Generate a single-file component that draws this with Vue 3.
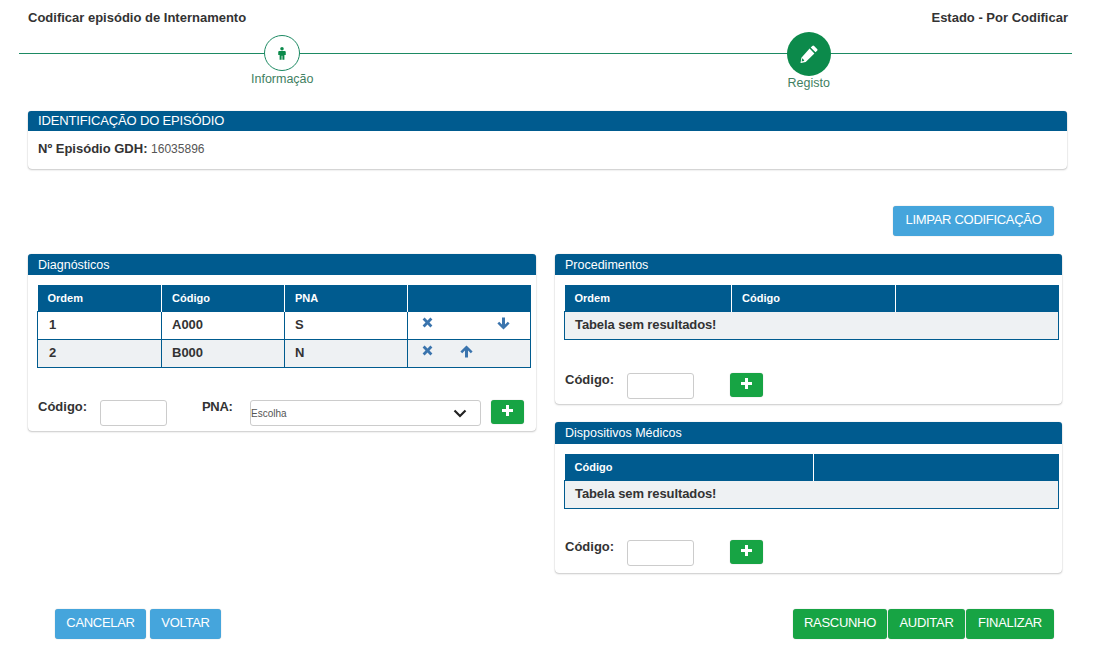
<template>
  <div class="page">
    <div class="top">
      <span>Codificar episódio de Internamento</span>
      <span>Estado - Por Codificar</span>
    </div>

    <div class="stepper">
      <div class="step">
        <div class="circle small">
          <svg width="8" height="15" viewBox="0 0 10 16"><circle cx="5" cy="2.2" r="2.2" fill="#0c8a4b"/><path d="M1.600 4.800h6.800q1.300 0 1.300 1.300v3.700H8v6H5.500v-5h-1v5H2v-6H.3V6.100q0-1.300 1.300-1.300z" fill="#0c8a4b"/></svg>
        </div>
        <div class="step-label first">Informação</div>
      </div>
      <div class="step">
        <div class="circle big">
          <svg width="18" height="18" viewBox="0 0 18 18"><path d="M12.300.9q.9-.9 1.800 0l3 3q.9.9 0 1.800l-1.600 1.600-4.800-4.800zM9.600 3.600l4.800 4.800-8.700 8.700-5.200 1 .9-5.300zM2.200 13.600l-.6 2.800 2.100-.4.6-.6-1.600-1.800z" fill="#fff"/></svg>
        </div>
        <div class="step-label">Registo</div>
      </div>
    </div>

    <section class="panel episode">
      <h3 class="panel-title big-title">IDENTIFICAÇÃO DO EPISÓDIO</h3>
      <div class="episode-body"><b>Nº Episódio GDH:</b> <span>16035896</span></div>
    </section>

    <div class="clear-row">
      <button class="btn blue clear">LIMPAR CODIFICAÇÃO</button>
    </div>

    <div class="columns">
      <div class="col-left">
        <section class="panel">
          <h3 class="panel-title">Diagnósticos</h3>
          <div class="panel-body left-body">
            <table class="grid">
              <colgroup><col v-for="(w, i) in leftWidths" :key="i" :style="{ width: w + 'px' }"></colgroup>
              <thead>
                <tr><th>Ordem</th><th>Código</th><th>PNA</th><th></th></tr>
              </thead>
              <tbody>
                <tr v-for="(row, i) in diagnosticos" :key="row.ordem" :class="{ odd: i == 1 }">
                  <td>{{ row.ordem }}</td>
                  <td>{{ row.codigo }}</td>
                  <td>{{ row.pna }}</td>
                  <td>
                    <div class="actions">
                      <svg class="ico" width="11" height="11" viewBox="0 0 11 11"><path d="M2.600.6 5.500 3.500 8.400.6l2 2-2.900 2.900 2.900 2.900-2 2-2.900-2.900-2.900 2.900-2-2 2.900-2.900L.6 2.600z" fill="#3a74ad"/></svg>
                      <svg v-if="row.up" class="ico up" width="13" height="13" viewBox="0 0 13 13"><path d="M6.500.5 12.600 6.600 10.800 8.300 8 5.600V12.500H5V5.600L2.200 8.300.4 6.600z" fill="#3a74ad"/></svg>
                      <svg v-if="row.down" class="ico down" width="13" height="13" viewBox="0 0 13 13"><path d="M6.500 12.500.4 6.400 2.200 4.700 5 7.400V.5H8V7.400L10.800 4.700 12.600 6.400z" fill="#3a74ad"/></svg>
                    </div>
                  </td>
                </tr>
              </tbody>
            </table>
            <div class="form-row">
              <label class="lbl">Código:</label>
              <input class="code" type="text">
              <label class="lbl pna">PNA:</label>
              <div class="select-wrap">
                <select class="sel"><option>Escolha</option></select>
                <svg class="chevron" width="14" height="9" viewBox="0 0 14 9"><path d="M1.500 1.500 7 7l5.500-5.500" fill="none" stroke="#222" stroke-width="2.200"/></svg>
              </div>
              <button class="btn green plus">
                <svg width="11" height="11" viewBox="0 0 11 11"><path d="M4 0h3v4h4v3H7v4H4V7H0V4h4z" fill="#fff"/></svg>
              </button>
            </div>
          </div>
        </section>
      </div>

      <div class="col-right">
        <section class="panel" v-for="p in rightPanels" :key="p.title">
          <h3 class="panel-title">{{ p.title }}</h3>
          <div class="panel-body right-body">
            <table class="grid">
              <colgroup><col v-for="(w, i) in p.widths" :key="i" :style="{ width: w + 'px' }"></colgroup>
              <thead>
                <tr><th v-for="(h, i) in p.heads" :key="i">{{ h }}</th></tr>
              </thead>
              <tbody>
                <tr class="odd empty"><td :colspan="p.heads.length">Tabela sem resultados!</td></tr>
              </tbody>
            </table>
            <div class="form-row right-form">
              <label class="lbl">Código:</label>
              <input class="code" type="text">
              <button class="btn green plus">
                <svg width="11" height="11" viewBox="0 0 11 11"><path d="M4 0h3v4h4v3H7v4H4V7H0V4h4z" fill="#fff"/></svg>
              </button>
            </div>
          </div>
        </section>
      </div>
    </div>

    <div class="bottom">
      <div class="group">
        <button class="btn blue foot cancel">CANCELAR</button>
        <button class="btn blue foot back">VOLTAR</button>
      </div>
      <div class="group tight">
        <button class="btn green foot draft">RASCUNHO</button>
        <button class="btn green foot audit">AUDITAR</button>
        <button class="btn green foot finish">FINALIZAR</button>
      </div>
    </div>
  </div>
</template>

<script setup>
const diagnosticos = [
  { ordem: 1, codigo: 'A000', pna: 'S', down: true },
  { ordem: 2, codigo: 'B000', pna: 'N', up: true }
]

const leftWidths = [124, 123, 123, 123]

const rightPanels = [
  { title: 'Procedimentos', heads: ['Ordem', 'Código', ''], widths: [167, 164, 163] },
  { title: 'Dispositivos Médicos', heads: ['Código', ''], widths: [249, 245] }
]
</script>

<style>
body {
  background: #fff;
}
</style>

<style scoped>
.page {
  width: 1108px;
  height: 655px;
  overflow: hidden;
  font-family: "Liberation Sans", Arial, sans-serif;
  color: #333;
  font-size: 13px;
}
.top {
  display: flex;
  justify-content: space-between;
  padding: 10px 40px 0 28px;
  font-weight: bold;
  font-size: 13px;
  line-height: 15px;
}
.stepper {
  position: relative;
  display: flex;
  margin: 7px 36px 0 19px;
  height: 79px;
}
.stepper::before {
  content: "";
  position: absolute;
  left: 0;
  right: 0;
  top: 21px;
  border-top: 1px solid #1d8a63;
}
.step {
  position: relative;
  flex: 1;
  display: flex;
  flex-direction: column;
  align-items: center;
}
.circle {
  display: flex;
  align-items: center;
  justify-content: center;
  border-radius: 50%;
  box-sizing: border-box;
}
.circle.small {
  width: 36px;
  height: 36px;
  margin-top: 3px;
  background: #fff;
  border: 1px solid #1d8a63;
}
.circle.big {
  width: 44px;
  height: 44px;
  background: #0c8a4b;
}
.step-label {
  font-size: 12.500px;
  line-height: 15px;
  color: #3f7f62;
}
.step-label.first {
  margin-top: 1px;
}
.panel {
  background: #fff;
  border-radius: 4px;
  box-shadow: 0 1px 2px rgba(0, 0, 0, 0.2), 0 0 1px rgba(0, 0, 0, 0.25);
}
.episode {
  margin: 0 41px 0 28px;
  height: 58px;
}
.panel-title {
  margin: 0;
  padding-left: 10px;
  height: 21px;
  line-height: 22px;
  background: #005b8f;
  color: #fff;
  font-size: 12.500px;
  font-weight: normal;
  border-radius: 3px 3px 0 0;
}
.col-right .panel:last-child .panel-title {
  height: 22px;
}
.big-title {
  font-size: 13px;
  letter-spacing: -0.15px;
  height: 20px;
  line-height: 20px;
}
.episode-body {
  padding: 10px;
  line-height: 15px;
  font-size: 13px;
}
.episode-body span {
  font-size: 12px;
  color: #555;
}
.clear-row {
  display: flex;
  justify-content: flex-end;
  margin: 37px 54px 18px 0;
}
.btn {
  border: 0;
  border-radius: 3px;
  font-family: inherit;
  color: #fff;
  padding: 0;
  box-shadow: 0 0 1px rgba(0, 0, 0, 0.35);
}
.blue {
  background: #45a5dc;
}
.green {
  background: #17a444;
}
.clear {
  width: 161px;
  height: 30px;
  font-size: 13px;
  letter-spacing: -0.3px;
  padding-bottom: 4px;
}
.columns {
  display: flex;
  align-items: flex-start;
  gap: 19px;
  margin-left: 28px;
}
.col-left {
  width: 508px;
}
.col-right {
  width: 507px;
  display: flex;
  flex-direction: column;
  gap: 18px;
}
.panel-body {
  padding: 10px 3px 5px 10px;
}
.col-right .panel:last-child .right-body {
  padding-bottom: 7px;
}
.left-body {
  padding-right: 5px;
}
.grid {
  width: 494px;
  margin-left: -1px;
  table-layout: fixed;
  border-collapse: collapse;
}
.left-body .grid {
  width: 493px;
}
.grid th {
  height: 26px;
  padding: 0 0 0 10px;
  background: #005b8f;
  color: #fff;
  text-align: left;
  font-size: 11px;
  border-left: 1px solid #fff;
}
.grid th:first-child {
  border-left: 0;
}
.grid td {
  height: 28px;
  padding: 0 0 3px 10px;
  border: 1px solid #005b8f;
  font-size: 13px;
  font-weight: bold;
  box-sizing: border-box;
}
.grid td:first-child {
  padding-left: 11px;
}
.odd td {
  background: #eef1f3;
}
.empty td:first-child {
  padding-left: 10px;
  letter-spacing: -0.1px;
}
.actions {
  position: relative;
  height: 14px;
  padding-left: 4px;
}
.ico {
  position: absolute;
  top: 0;
}
.ico.up {
  left: 42px;
}
.ico.down {
  left: 79px;
}
.form-row {
  display: flex;
  align-items: flex-start;
  margin-top: 32px;
}
.right-form {
  margin-top: 33px;
}
.col-right .panel:last-child .right-form {
  margin-top: 31px;
}
.lbl {
  width: 62px;
  margin-top: -1px;
  font-weight: bold;
  font-size: 13px;
  line-height: 15px;
}
.code {
  box-sizing: border-box;
  width: 67px;
  height: 26px;
  border: 1px solid #ccc;
  border-radius: 3px;
  padding: 0;
  background: #fff;
}
.lbl.pna {
  width: 48px;
  margin-left: 35px;
  letter-spacing: -0.3px;
}
.select-wrap {
  position: relative;
  width: 231px;
  height: 26px;
}
.sel {
  appearance: none;
  box-sizing: border-box;
  width: 100%;
  height: 100%;
  border: 1px solid #ccc;
  border-radius: 3px;
  background: #fff;
  font-family: inherit;
  font-size: 10px;
  color: #555;
  padding: 0;
}
.chevron {
  position: absolute;
  right: 14px;
  top: 9px;
}
.plus {
  width: 33px;
  height: 24px;
  margin-left: 10px;
  display: flex;
  align-items: center;
  justify-content: center;
  padding-bottom: 4px;
}
.right-form .plus {
  margin-left: 36px;
}
.bottom {
  display: flex;
  justify-content: space-between;
  margin: 36px 54px 0 55px;
}
.group {
  display: flex;
  gap: 4px;
}
.group.tight {
  gap: 1px;
}
.foot {
  height: 30px;
  font-size: 13px;
  letter-spacing: -0.3px;
  padding-bottom: 4px;
}
.cancel {
  width: 91px;
}
.back {
  width: 71px;
}
.draft {
  width: 94px;
}
.audit {
  width: 77px;
}
.finish {
  width: 88px;
}
</style>
